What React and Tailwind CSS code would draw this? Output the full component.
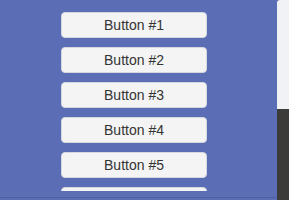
import React from 'react';

const items = [1, 2, 3, 4, 5, 6];

export default function App() {
  return (
    <div className="flex h-[200px] w-[289px] overflow-hidden bg-[#5b6db4] font-['Liberation_Sans',Arial,sans-serif]">
      <div className="flex flex-1 flex-col">
        <div className="flex h-[191px] flex-col gap-[9px] overflow-hidden pl-[61px] pt-[12px]">
          {items.map((n) => (
            <button
              key={n}
              type="button"
              className="h-[26px] w-[146px] shrink-0 rounded-[4px] border border-[#d6d8e0] bg-[#f4f4f4] text-[14px] text-[#333]"
            >
              {n < 6 ? `Button #${n}` : ''}
            </button>
          ))}
        </div>
        <div className="mt-[6px] h-px bg-[#4f609f]" />
      </div>
      <div className="flex w-[12px] flex-col">
        <div className="h-[109px] rounded-tl-[3px] bg-[#f1f2f6]" />
        <div className="flex-1 bg-[#3b3b3a]" />
      </div>
    </div>
  );
}
